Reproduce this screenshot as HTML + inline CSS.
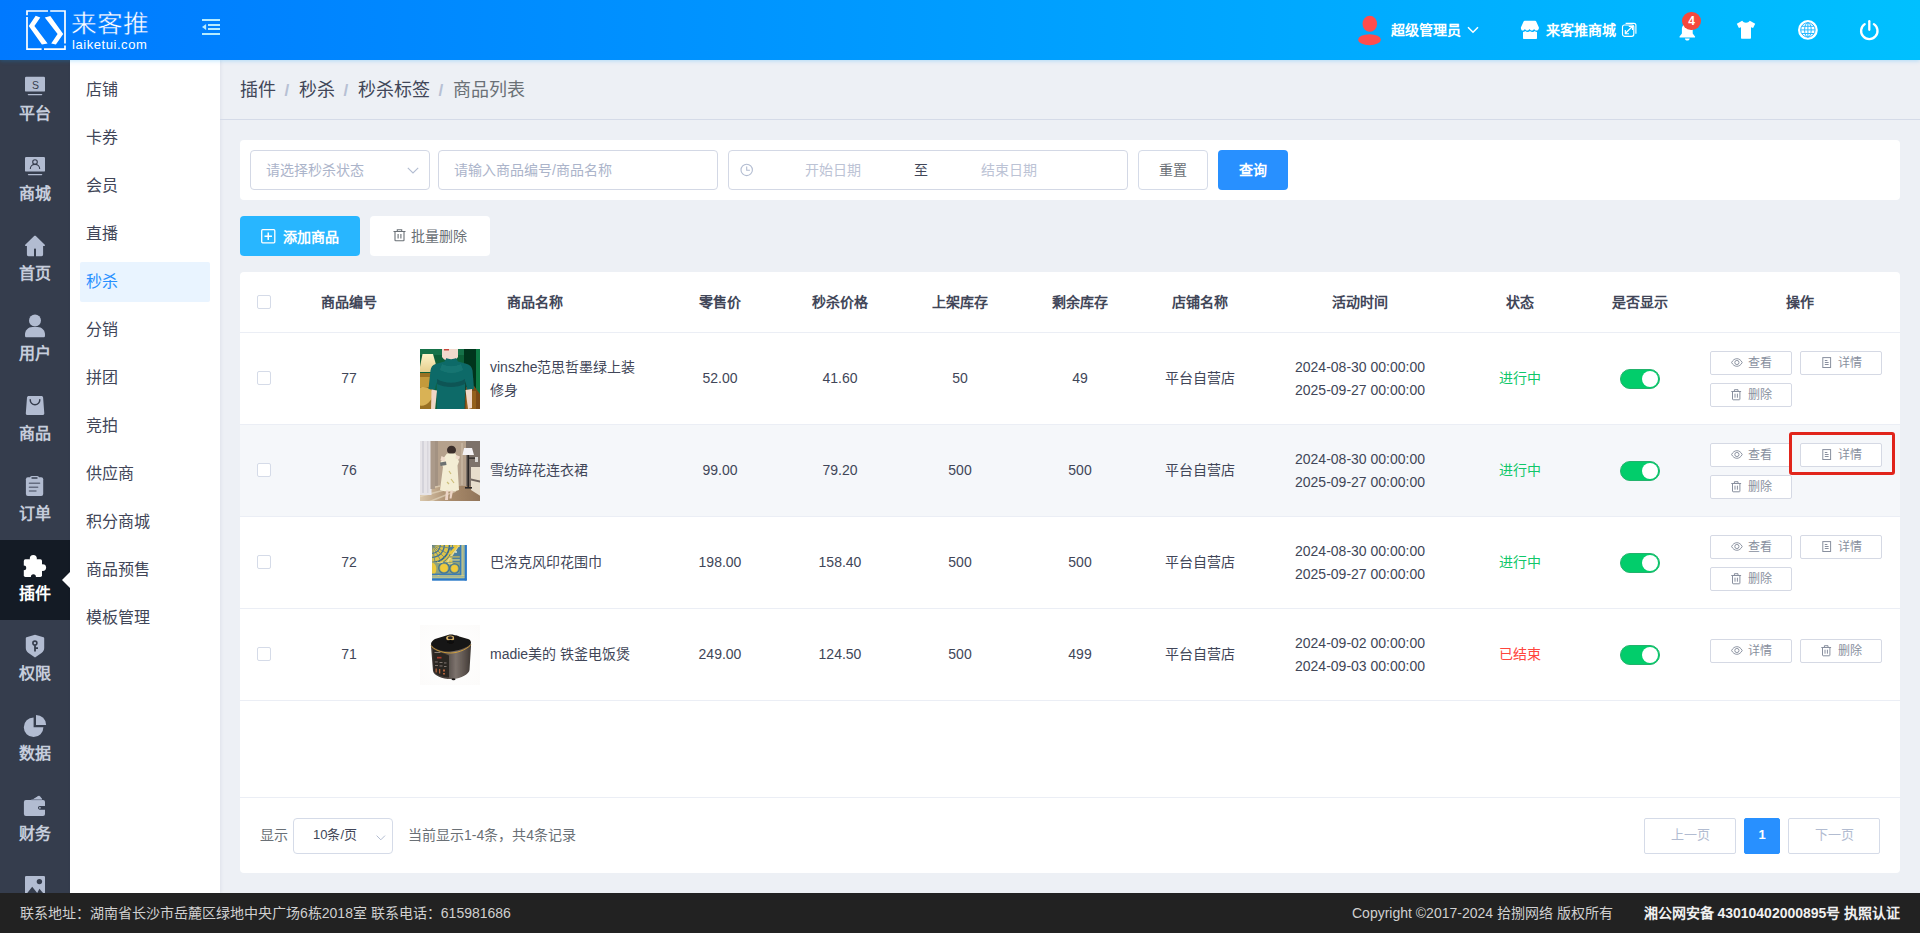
<!DOCTYPE html>
<html lang="zh-CN">
<head>
<meta charset="utf-8">
<title>商品列表</title>
<style>
*{box-sizing:border-box;margin:0;padding:0}
html,body{width:1920px;height:933px;overflow:hidden}
body{font-family:"Liberation Sans",sans-serif;font-size:14px;color:#414658;background:#edf0f5;position:relative}
svg{display:block;overflow:visible}
#hd{position:absolute;left:0;top:0;width:1920px;height:60px;background:linear-gradient(90deg,#0079ff,#00c0ff);box-shadow:0 1px 4px rgba(0,160,255,.25);z-index:10}
#logo{position:absolute;left:0;top:0}
#logotxt{position:absolute;left:71px;top:7px;color:#fff;font-size:26px;line-height:32px;white-space:nowrap;font-weight:normal;transform-origin:0 0;transform:translate(.3px,2.3px) scale(.99,.925);-webkit-text-stroke:.45px #007eff}
#logosub{position:absolute;left:72px;top:38.150px;color:#fff;font-size:13px;line-height:14px;letter-spacing:.56px;white-space:nowrap}
.hx{position:absolute;color:#fff;font-size:14px;line-height:20px;font-weight:bold;white-space:nowrap;top:20px}
.ha{position:absolute;left:0;top:0}
#nav1{position:absolute;left:0;top:60px;width:70px;height:833px;background:#353d4d;overflow:hidden}
.n1{position:absolute;left:0;width:70px;height:80px;color:#c6cddc}
.n1 svg{position:absolute;left:0;top:0}
.n1 span{position:absolute;left:0;top:43px;width:70px;text-align:center;font-size:16px;line-height:22px;font-weight:bold;white-space:nowrap}
.n1.on{background:#141b25;color:#fff}
#nav2{position:absolute;left:70px;top:60px;width:150px;height:833px;background:#fff;box-shadow:1px 0 3px rgba(60,60,100,.08)}
.n2{position:absolute;left:10px;width:130px;height:40px;line-height:40px;padding-left:6px;font-size:16px;color:#414658;border-radius:2px;white-space:nowrap}
.n2.on{background:#e9f4ff;color:#2890ff}
#bc{position:absolute;left:220px;top:60px;width:1700px;height:60px;border-bottom:1px solid #d5dbe8;white-space:nowrap}
#bc span{position:absolute;top:0;font-size:18px;line-height:60px;color:#414658}
#bc i{position:absolute;top:1px;font-style:normal;color:#b7c0d4;font-size:17px;line-height:60px;font-weight:bold}
#bc span.l{color:#6a7076}
#sr{position:absolute;left:240px;top:140px;width:1660px;height:60px;background:#fff;border-radius:4px}
.ip{position:absolute;top:10px;height:40px;border:1px solid #d3d8e5;border-radius:4px;background:#fff;color:#abb4ca;font-size:14px;line-height:38px;white-space:nowrap}
.ip span{position:absolute;top:0}
.ip svg{position:absolute}
.btn{position:absolute;border-radius:4px;font-size:14px;white-space:nowrap}
.btn span{position:absolute;top:0}
.btn svg{position:absolute}
#tb{position:absolute;left:240px;top:272px;width:1660px;height:526px;background:#fff;border-radius:4px 4px 0 0;overflow:hidden}
.row{position:absolute;left:0;width:1660px;border-bottom:1px solid #ebeef5}
.row.hv{background:#f5f7fa}
.c{position:absolute;text-align:center;white-space:nowrap;font-size:14px;line-height:23px;color:#414658}
.th .c{font-weight:bold}
.ck{position:absolute;left:17px;width:14px;height:14px;border:1px solid #d5dbe8;border-radius:2px;background:#fff}
.sw{position:absolute;left:1380px;width:40px;height:20px;border-radius:10px;background:#02cd6b;border:1px solid #22b36c}
.sw:after{content:"";position:absolute;left:21px;top:1px;width:16px;height:16px;border-radius:8px;background:#fff}
.ob{position:absolute;width:82px;height:24px;border:1px solid #d5d9e4;border-radius:2px;background:#fff;color:#888f9e;font-size:12px;line-height:22px;white-space:nowrap}
.ob svg{position:absolute}
.ob span{position:absolute;left:37px;top:0}
.pi{position:absolute;left:180px;width:60px;height:60px;overflow:hidden}
#pg{position:absolute;left:240px;top:797px;width:1660px;height:76px;background:#fff;border-top:1px solid #ebeef5;border-radius:0 0 4px 4px;font-size:14px;color:#6a7076;white-space:nowrap}
#pg span{position:absolute;line-height:20px}
.pb{position:absolute;top:20px;height:36px;border:1px solid #d5dbe8;border-radius:2px;background:#fff;color:#b2bcd1;text-align:center;line-height:32px;font-size:13px}
#ft{position:absolute;left:0;top:893px;width:1920px;height:40px;background:#222;color:#d0d0d0;font-size:14px;line-height:40px;white-space:nowrap;z-index:11}
#ft span{position:absolute;top:0}
#hl{position:absolute;left:1788.800px;top:432.300px;width:106.500px;height:43.200px;border:3px solid #e1251b;border-radius:3px;z-index:5}
</style>
</head>
<body>
<div id="hd">
<svg id="logo" width="160" height="60" viewBox="0 0 160 60">
<g fill="none" stroke="#fff" stroke-width="1.7">
<path d="M48 11H27v4.2M27 17v32.2h14.6M44 49.2h21V45.5M65 43.6V11H50.2"/>
</g>
<polygon fill="#fff" points="35.70,15.80 40.30,17.60 34.40,25.90 47.60,43.40 41.90,44.60 28.75,25.90"/>
<polygon fill="#fff" points="44.80,17.60 50.30,15.90 63.20,33.90 55.90,44.60 51.20,43.40 57.60,33.90"/>
</svg>
<div id="logotxt">来客推</div>
<div id="logosub">laiketui.com</div>
<svg class="ha" style="left:0;top:0" width="240" height="60" viewBox="0 0 240 60"><g fill="#b4ebff"><rect x="202" y="19" width="18" height="2"/><rect x="208" y="24" width="12" height="2"/><rect x="208" y="28" width="12" height="2"/><rect x="202" y="33" width="18" height="2"/><path d="M202 27l4.100-2.950v5.900z"/></g></svg>
<svg class="ha" style="left:1356px;top:14px" width="28" height="34" viewBox="0 0 28 34">
<ellipse cx="13.8" cy="9.8" rx="7.3" ry="8" fill="#ff4d4d"/>
<ellipse cx="13.5" cy="25.7" rx="11.4" ry="5.5" fill="#ff4d4d"/></svg>
<div class="hx" style="left:1390.700px">超级管理员</div>
<svg class="ha" style="left:1467px;top:26px" width="12" height="8" viewBox="0 0 12 8"><path d="M1 1.3l5 5 5-5" fill="none" stroke="#fff" stroke-width="1.5"/></svg>
<svg class="ha" style="left:1520px;top:20px" width="20" height="20" viewBox="0 0 20 20">
<path fill="#fff" d="M4.700 .8h10.400c.5 0 .9.300 1.100.7l2.600 5.800c.1.200.100.400.100.600 0 1.500-1.100 2.600-2.500 2.600-1.100 0-1.900-.6-2.300-1.500-.4.900-1.300 1.500-2.300 1.500s-1.900-.6-2.300-1.500c-.4.900-1.200 1.500-2.300 1.500-1 0-1.900-.6-2.300-1.500-.4.900-1.200 1.500-2.300 1.500C1.700 10.500 .900 9.400 .900 7.900c0-.2 0-.4.100-.6l2.600-5.800c.2-.4.600-.7 1.100-.7z"/>
<path fill="#fff" d="M3 12c.9-.1 1.600-.5 2.200-1.100.6.700 1.400 1.100 2.400 1.100s1.800-.4 2.400-1.100c.6.700 1.400 1.100 2.400 1.100s1.800-.4 2.400-1.100c.6.600 1.300 1 2.200 1.100v6c0 .6-.4 1-1 1H4c-.6 0-1-.4-1-1z"/></svg>
<div class="hx" style="left:1545.600px">来客推商城</div>
<svg class="ha" style="left:1621px;top:22px" width="16" height="16" viewBox="0 0 16 16"><g fill="none" stroke="#fff" stroke-width="1.150">
<rect x="1.500" y="3" width="11.300" height="11.300" rx="2"/><path d="M4.600 1.300h8.300c1.100 0 2 .9 2 2v8.400"/><path d="M4.300 11.500l7-7M7.800 4.300h3.700v3.700M4.300 8v3.700h3.700"/></g></svg>
<svg class="ha" style="left:1678px;top:22px" width="19" height="20" viewBox="0 0 19 20">
<path fill="#fff" d="M9.300 1.500c3.300 0 5.400 2.500 5.400 5.800v4.200l2.300 3.100c.3.400 0 1-.5 1H2.100c-.5 0-.8-.6-.5-1l2.300-3.100V7.300c0-3.300 2.100-5.800 5.400-5.800zM6.900 16.500h4.800c0 1.300-1.100 2.100-2.400 2.100s-2.400-.8-2.400-2.100z"/></svg>
<div class="ha" style="left:1682px;top:12px;width:19px;height:18px;border-radius:9px;background:#f5493d;color:#fff;font-size:12px;line-height:18px;text-align:center;font-weight:bold">4</div>
<svg class="ha" style="left:1736px;top:20px" width="20" height="20" viewBox="0 0 20 20">
<path fill="#fff" d="M6.200 .8c.8 1.300 2.200 1.900 3.800 1.900s3-.6 3.800-1.900l5.400 2.900-2.100 4.300-2.100-.8V17.700c0 .6-.4 1-1 1H6c-.6 0-1-.4-1-1V7.200l-2.100.8L.8 3.700z"/></svg>
<svg class="ha" style="left:1798px;top:20px" width="20" height="20" viewBox="0 0 20 20">
<circle cx="9.900" cy="9.900" r="9.900" fill="#fff"/>
<g fill="none" stroke="#26b8ff" stroke-width="1"><ellipse cx="9.900" cy="9.900" rx="7.200" ry="7.200"/><ellipse cx="9.900" cy="9.900" rx="3.300" ry="7.200"/><path d="M9.900 2.700v14.400M2.700 9.900h14.400M3.800 6.300h12.200M3.800 13.500h12.200"/></g></svg>
<svg class="ha" style="left:1859px;top:19px" width="21" height="22" viewBox="0 0 21 22">
<g fill="none" stroke="#fff" stroke-width="2.300" stroke-linecap="round"><path d="M10.300 2.200v8.600"/><path d="M5.700 5.100a8.200 8.200 0 1 0 9.200 0"/></g></svg>
</div>
<div id="nav1">
<div class="n1" style="top:0px"><svg width="70" height="80" viewBox="0 0 70 80"><rect x="25" y="16.8" width="20" height="14.8" rx="1.200" fill="#b2bcd1"/><rect x="27.700" y="33.900" width="14.600" height="1.400" rx=".7" fill="#b2bcd1"/><text x="35.5" y="28.700" font-size="10.500" text-anchor="middle" fill="#353d4d" font-family="Liberation Sans">S</text></svg><span>平台</span></div>
<div class="n1" style="top:80px"><svg width="70" height="80" viewBox="0 0 70 80"><rect x="25" y="16.9" width="20" height="14.700" rx="1.200" fill="#b2bcd1"/><rect x="27.800" y="33.900" width="14.500" height="1.400" rx=".7" fill="#b2bcd1"/><circle cx="35" cy="22" r="2.300" fill="none" stroke="#353d4d" stroke-width="1.100"/><path d="M30.300 28.900c0-2.600 2.100-4.500 4.700-4.500s4.700 1.900 4.700 4.500" fill="none" stroke="#353d4d" stroke-width="1.100"/></svg><span>商城</span></div>
<div class="n1" style="top:160px"><svg width="70" height="80" viewBox="0 0 70 80"><path fill="#b2bcd1" d="M33.900 16.300c.6-.6 1.600-.6 2.200 0l8.700 8.400c.5.500.2 1.400-.6 1.400h-1.100v8.500c0 .9-.7 1.600-1.600 1.600H36v-6.600c0-.6-.4-1-1-1s-1 .4-1 1v6.600h-5.500c-.9 0-1.600-.7-1.600-1.600v-8.500h-1.100c-.8 0-1.100-.9-.6-1.400z"/></svg><span>首页</span></div>
<div class="n1" style="top:240px"><svg width="70" height="80" viewBox="0 0 70 80"><circle cx="35" cy="20.500" r="6" fill="#b2bcd1"/><path fill="#b2bcd1" d="M25 34.300c0-4.100 3.300-7.400 7.400-7.400h5.200c4.100 0 7.400 3.300 7.400 7.400v1.400c0 .9-.7 1.600-1.600 1.600H26.600c-.9 0-1.600-.7-1.600-1.600z"/></svg><span>用户</span></div>
<div class="n1" style="top:320px"><svg width="70" height="80" viewBox="0 0 70 80"><path fill="#b2bcd1" d="M28.700 15.900h12.700c.9 0 1.700.7 1.700 1.600l1.200 15.800c.1 1-.7 1.800-1.700 1.800H27.500c-1 0-1.800-.8-1.700-1.800L27 17.500c.1-.9.800-1.600 1.700-1.600z"/><path d="M30.200 19.800c0 2.800 2.100 4.900 4.800 4.900s4.800-2.100 4.800-4.900" fill="none" stroke="#353d4d" stroke-width="1.500" stroke-linecap="round"/></svg><span>商品</span></div>
<div class="n1" style="top:400px"><svg width="70" height="80" viewBox="0 0 70 80"><rect x="25.900" y="17.200" width="17.300" height="18.900" rx="2" fill="#b2bcd1"/><rect x="30" y="15.900" width="9" height="3.600" rx="1.600" fill="#b2bcd1"/><rect x="31.300" y="17.300" width="6.400" height="1.500" rx=".7" fill="#353d4d"/><g fill="#656d81"><rect x="28.700" y="22.400" width="11.600" height="1.500" rx=".7"/><rect x="28.700" y="26.400" width="9.700" height="1.500" rx=".7"/><rect x="28.700" y="30.200" width="8" height="1.500" rx=".7"/></g></svg><span>订单</span></div>
<div class="n1 on" style="top:480px"><svg width="70" height="80" viewBox="0 0 70 80"><rect x="23.800" y="19.300" width="18.200" height="17.600" rx="1.600" fill="#fff"/><circle cx="33.300" cy="18.500" r="3.500" fill="#fff"/><circle cx="42.700" cy="27.600" r="3.400" fill="#fff"/><circle cx="23.900" cy="27.900" r="2.400" fill="#141b25"/><circle cx="33.400" cy="36.700" r="2.500" fill="#141b25"/></svg><span>插件</span><svg style="left:62px;top:32px" width="8" height="16" viewBox="0 0 8 16"><path d="M8 0L0 8l8 8z" fill="#fff"/></svg></div>
<div class="n1" style="top:560px"><svg width="70" height="80" viewBox="0 0 70 80"><path fill="#b2bcd1" d="M35 14.700l8.500 2.600c.4.100.7.500.7.900V28c0 2-1 3.800-2.700 4.900L35 37.400l-6.500-4.500c-1.700-1.100-2.700-2.900-2.700-4.900v-9.800c0-.4.300-.8.700-.9z"/><circle cx="34.900" cy="23.100" r="2" fill="none" stroke="#353d4d" stroke-width="1.600"/><path d="M35 25.600v5.800M35.500 28.100h2.500" fill="none" stroke="#353d4d" stroke-width="1.800"/></svg><span>权限</span></div>
<div class="n1" style="top:640px"><svg width="70" height="80" viewBox="0 0 70 80"><path fill="#b2bcd1" d="M33.600 17.500v9.800h9.800a9.800 9.800 0 1 1-9.800-9.800z"/><path fill="#b2bcd1" d="M36 14.900a10.100 10.100 0 0 1 10.100 10.100H36z"/></svg><span>数据</span></div>
<div class="n1" style="top:720px"><svg width="70" height="80" viewBox="0 0 70 80"><path fill="#8d96aa" d="M32.200 20l6-3.900c.5-.3 1.100-.2 1.500.2L42 18.800V20z"/><path fill="#b2bcd1" d="M33.400 19l5-3c.4-.2.9-.2 1.200.2L41.800 18.400V19z"/><rect x="23.900" y="20" width="21.100" height="16.100" rx="2" fill="#b2bcd1"/><path fill="#353d4d" d="M45.200 26h-5.400c-1 0-1.800.8-1.800 1.800s.8 1.900 1.800 1.900h5.400z"/><circle cx="39.900" cy="27.800" r=".9" fill="#b2bcd1"/><rect x="31.300" y="19.300" width="10.900" height=".9" fill="#7a839b"/></svg><span>财务</span></div>
<div class="n1" style="top:800px"><svg width="70" height="80" viewBox="0 0 70 80"><rect x="25" y="15.900" width="20" height="20" rx="1.200" fill="#b2bcd1"/><circle cx="39.400" cy="21.600" r="2.700" fill="#353d4d"/><path fill="#353d4d" d="M26.800 33.600l5.400-6.900 5 6.300 2.200-4.200 4.200 4.800z"/></svg><span>图片</span></div>
</div>
<div id="nav2">
<div class="n2" style="top:10px">店铺</div>
<div class="n2" style="top:58px">卡券</div>
<div class="n2" style="top:106px">会员</div>
<div class="n2" style="top:154px">直播</div>
<div class="n2 on" style="top:202px">秒杀</div>
<div class="n2" style="top:250px">分销</div>
<div class="n2" style="top:298px">拼团</div>
<div class="n2" style="top:346px">竞拍</div>
<div class="n2" style="top:394px">供应商</div>
<div class="n2" style="top:442px">积分商城</div>
<div class="n2" style="top:490px">商品预售</div>
<div class="n2" style="top:538px">模板管理</div>
</div>
<div id="bc">
<span style="left:20px">插件</span><i style="left:64.500px">/</i>
<span style="left:79px">秒杀</span><i style="left:123.500px">/</i>
<span style="left:138px">秒杀标签</span><i style="left:218.500px">/</i>
<span class="l" style="left:233px">商品列表</span>
</div>
<div id="sr">
<div class="ip" style="left:10px;width:180px"><span style="left:15px">请选择秒杀状态</span>
<svg style="left:156px;top:16px" width="12" height="7" viewBox="0 0 12 7"><path d="M.8.800l5.200 5.200 5.200-5.200" fill="none" stroke="#b2bcd1" stroke-width="1.100"/></svg></div>
<div class="ip" style="left:198px;width:280px"><span style="left:15px">请输入商品编号/商品名称</span></div>
<div class="ip" style="left:488px;width:400px">
<svg style="left:11px;top:12px" width="14" height="14" viewBox="0 0 14 14"><circle cx="6.700" cy="6.900" r="5.700" fill="none" stroke="#b2bcd1" stroke-width="1.100"/><path d="M6.700 3.500v3.700h3.200" fill="none" stroke="#b2bcd1" stroke-width="1.100"/></svg>
<span style="left:76px;color:#bcc3d5">开始日期</span><span style="left:185px;color:#414658">至</span><span style="left:252px;color:#bcc3d5">结束日期</span></div>
<div class="btn" style="left:898px;top:10px;width:70px;height:40px;border:1px solid #d5dbe8;background:#fff;color:#6a7076;line-height:38px;text-align:center">重置</div>
<div class="btn" style="left:978px;top:10px;width:70px;height:40px;background:#2890ff;color:#fff;line-height:40px;text-align:center;font-weight:bold">查询</div>
</div>
<div class="btn" style="left:240px;top:216px;width:120px;height:40px;background:#28b6ff;color:#fff;line-height:40px">
<svg style="left:21px;top:13px" width="15" height="15" viewBox="0 0 15 15"><rect x=".7" y=".7" width="13.100" height="13.100" rx="1" fill="none" stroke="#fff" stroke-width="1.300"/><path d="M7.250 3.500v7.500M3.500 7.250h7.500" stroke="#fff" stroke-width="1.500"/></svg>
<span style="left:42.500px;top:1px;font-weight:bold">添加商品</span></div>
<div class="btn" style="left:370px;top:216px;width:120px;height:40px;background:#fff;color:#6a7076;line-height:40px">
<svg style="left:23px;top:13.400px" width="13" height="12.500" viewBox="0 0 13 14" preserveAspectRatio="none"><g fill="none" stroke="#6a7076" stroke-width="1.100"><path d="M.5 2.900h12M4.300 2.700V.8h4.400v1.900M2 3v9.500c0 .4.300.7.700.7h7.600c.4 0 .7-.3.700-.7V3M5.100 5.600v5M7.900 5.600v5"/></g></svg>
<span style="left:41px">批量删除</span></div>
<div id="tb">
<div class="row th" style="top:0;height:61px"><div class="ck" style="top:23px"></div><div class="c" style="left:48px;width:122px;top:19px;">商品编号</div><div class="c" style="left:170px;width:250px;top:19px;">商品名称</div><div class="c" style="left:420px;width:120px;top:19px;">零售价</div><div class="c" style="left:540px;width:120px;top:19px;">秒杀价格</div><div class="c" style="left:660px;width:120px;top:19px;">上架库存</div><div class="c" style="left:780px;width:120px;top:19px;">剩余库存</div><div class="c" style="left:900px;width:120px;top:19px;">店铺名称</div><div class="c" style="left:1020px;width:200px;top:19px;">活动时间</div><div class="c" style="left:1220px;width:120px;top:19px;">状态</div><div class="c" style="left:1340px;width:120px;top:19px;">是否显示</div><div class="c" style="left:1460px;width:200px;top:19px;">操作</div></div>
<div class="row" style="top:61px;height:92px"><div class="ck" style="top:38px"></div><div class="c" style="left:48px;width:122px;top:34px;">77</div><div class="pi" style="top:16px"><svg width="60" height="60" viewBox="0 0 60 60"><defs><filter id="b77" x="-5%" y="-5%" width="110%" height="110%"><feGaussianBlur stdDeviation=".7"/></filter>
<linearGradient id="g77a" x1="0" y1="0" x2="0" y2="1"><stop offset="0" stop-color="#fdf3c8"/><stop offset="1" stop-color="#e6cf8e"/></linearGradient></defs>
<rect width="60" height="60" fill="#0f5a39"/>
<g filter="url(#b77)">
<rect x="-2" y="-2" width="64" height="64" fill="#106039"/>
<rect x="-2" y="-2" width="50" height="8" fill="#17724a"/>
<rect x="44" y="-2" width="13" height="64" fill="#06351f"/>
<rect x="56" y="-2" width="6" height="64" fill="#107a45"/>
<rect x="-2" y="24" width="16" height="40" fill="#9a7124"/>
<path d="M-2 40c4-3 8-2 12 0s3 8 0 12-8 6-12 4z" fill="#d9b254"/>
<path d="M0 28h10v10H0z" fill="#c49a3a"/>
<path d="M2.500 5h10.500l5 18H-1z" fill="url(#g77a)"/>
<path d="M46 38l8-1 6 8v17H44z" fill="#7a4a18"/>
<path d="M46 42h10v20H46z" fill="#94601f"/>
<path d="M22-2h16v10c-2 3-5 4-8 4s-6-1-8-4z" fill="#f1d9cd"/>
<path d="M24-1h5v2.500h-5z" fill="#c8453a"/>
<path d="M26.500 9c2 1.500 7 1.500 9.500 0l2 3.500 9 2.500c3 1 5 3 5.500 6.500l1.500 18.500-7 1-1.500-9-1 29H17l-.5-28-1.500 8-6.500-1 2-18.500c.5-3.500 2-5.500 5-6.500l9-2.500z" fill="#0e6a68"/>
<path d="M17 30c8 5 20 5 28 0l0 5c-8 4-20 4-28 0z" fill="#0a5455"/>
<path d="M22 15c5 3 13 3 19 0l2 6c-7 4-16 4-23 0z" fill="#1a7a76" opacity=".7"/>
<path d="M11.500 40.500l5.500 1-2 20h-4z" fill="#f0d6c6"/>
<path d="M45.500 41l6.500-1 0 19-4 1z" fill="#f0d6c6"/>
</g></svg></div><div class="c" style="left:250px;width:160px;top:23px;text-align:left;white-space:normal">vinszhe范思哲墨绿上装<br>修身</div><div class="c" style="left:420px;width:120px;top:34px;">52.00</div><div class="c" style="left:540px;width:120px;top:34px;">41.60</div><div class="c" style="left:660px;width:120px;top:34px;">50</div><div class="c" style="left:780px;width:120px;top:34px;">49</div><div class="c" style="left:900px;width:120px;top:34px;">平台自营店</div><div class="c" style="left:1020px;width:200px;top:23px;">2024-08-30 00:00:00<br>2025-09-27 00:00:00</div><div class="c" style="left:1220px;width:120px;top:34px;color:#0fc76a">进行中</div><div class="sw" style="top:36px"></div><div class="ob" style="left:1470px;top:18px"><svg style="left:20px;top:5.800px" width="12" height="9" viewBox="0 0 12 9"><g fill="none" stroke="#888f9e" stroke-width=".95"><path d="M.6 4.500C1.900 2 3.700 .700 5.900 .700s4 1.300 5.300 3.800C9.900 7 8.100 8.300 5.900 8.300S1.900 7 .6 4.500z"/><circle cx="5.900" cy="4.500" r="2.100"/></g></svg><span>查看</span></div><div class="ob" style="left:1560px;top:18px"><svg style="left:21px;top:5px" width="10" height="12" viewBox="0 0 10 12"><g fill="none" stroke="#888f9e" stroke-width="1"><rect x=".8" y=".6" width="7.800" height="9.900"/><path d="M2.800 3.500h2.600M2.800 5.500h3.800M2.800 7.500h3.800"/></g></svg><span>详情</span></div><div class="ob" style="left:1470px;top:50px"><svg style="left:20px;top:4.600px" width="11" height="12" viewBox="0 0 11 12"><g fill="none" stroke="#888f9e" stroke-width="1"><path d="M.3 2.500h9.800M3.400 2.300V.700h3.600v1.600M1.500 2.700v7.500c0 .3.300.6.600.6h6.200c.3 0 .6-.3.600-.6V2.700M4 4.700v4M6.400 4.700v4"/></g></svg><span>删除</span></div></div>
<div class="row hv" style="top:153px;height:92px"><div class="ck" style="top:38px"></div><div class="c" style="left:48px;width:122px;top:34px;">76</div><div class="pi" style="top:16px"><svg width="60" height="60" viewBox="0 0 60 60"><defs><filter id="b76" x="-5%" y="-5%" width="110%" height="110%"><feGaussianBlur stdDeviation=".65"/></filter>
<linearGradient id="g76f" x1="0" y1="0" x2="1" y2="0"><stop offset="0" stop-color="#dccbb0"/><stop offset=".5" stop-color="#a98b6c"/><stop offset="1" stop-color="#8f7358"/></linearGradient></defs>
<rect width="60" height="60" fill="#b09c88"/>
<g filter="url(#b76)">
<rect x="-2" y="-2" width="64" height="50" fill="#b5a18c"/>
<rect x="15" y="-2" width="3" height="50" fill="#a39282"/>
<rect x="41" y="2" width="2" height="42" fill="#c3b19c"/>
<rect x="46" y="-2" width="16" height="50" fill="#7d726b"/>
<rect x="-2" y="45" width="64" height="17" fill="url(#g76f)"/>
<path d="M-2 50l22-5M-2 56l30-8M6 62l30-12" stroke="#e8dcc4" stroke-width="1.500" opacity=".6" fill="none"/>
<rect x="-2" y="-2" width="13.500" height="56" fill="#e6e4e8"/>
<rect x="2" y="-2" width="2" height="54" fill="#d4d3da"/><rect x="7" y="-2" width="1.500" height="54" fill="#d8d6dc"/>
<rect x="10.500" y="-2" width="4.500" height="50" fill="#ab9a8a"/>
<path d="M51 26h11v30l-11-7z" fill="#e7ddcc"/><path d="M51 37.500l11 2.500v2l-11-2.500z" fill="#6f655e"/>
<path d="M44 7h8l2 7H42.500z" fill="#f4f2f4"/>
<rect x="47.400" y="14" width="1.700" height="33" fill="#2b2725"/><rect x="45" y="46" width="7" height="1.600" fill="#2b2725"/>
<rect x="49" y="16.500" width="8" height="1.300" fill="#2b2725"/><rect x="55" y="16" width="3" height="5" fill="#d9d6d3"/>
<ellipse cx="31.500" cy="9" rx="4.500" ry="4.300" fill="#3a2f2b"/>
<path d="M27 12.500h8.500l3.500 8-1.500 4 1.500 24.500c-6 2-13 2-19 0l3-23-2.500-5z" fill="#f3edd4"/>
<path d="M21.500 15l4 2-1 4-4-2z" fill="#f0dccc"/><path d="M36 14l4 1.500-1 3-3.500-1z" fill="#f0dccc"/>
<path d="M20 21.500l6-1 .5 3.500-6 1z" fill="#6d7272"/>
<path d="M29 30l2 3M31 38l3 4M27 41l2 2" stroke="#cdbf7a" stroke-width="1.200" fill="none"/>
<path d="M26 49.500h2.500l-.5 9.500h-3zM30.500 49.500H33l-1.500 8h-2z" fill="#ecd4c5"/>
</g></svg></div><div class="c" style="left:250px;width:160px;top:34px;text-align:left;white-space:normal">雪纺碎花连衣裙</div><div class="c" style="left:420px;width:120px;top:34px;">99.00</div><div class="c" style="left:540px;width:120px;top:34px;">79.20</div><div class="c" style="left:660px;width:120px;top:34px;">500</div><div class="c" style="left:780px;width:120px;top:34px;">500</div><div class="c" style="left:900px;width:120px;top:34px;">平台自营店</div><div class="c" style="left:1020px;width:200px;top:23px;">2024-08-30 00:00:00<br>2025-09-27 00:00:00</div><div class="c" style="left:1220px;width:120px;top:34px;color:#0fc76a">进行中</div><div class="sw" style="top:36px"></div><div class="ob" style="left:1470px;top:18px"><svg style="left:20px;top:5.800px" width="12" height="9" viewBox="0 0 12 9"><g fill="none" stroke="#888f9e" stroke-width=".95"><path d="M.6 4.500C1.900 2 3.700 .700 5.900 .700s4 1.300 5.300 3.800C9.900 7 8.100 8.300 5.900 8.300S1.900 7 .6 4.500z"/><circle cx="5.900" cy="4.500" r="2.100"/></g></svg><span>查看</span></div><div class="ob" style="left:1560px;top:18px"><svg style="left:21px;top:5px" width="10" height="12" viewBox="0 0 10 12"><g fill="none" stroke="#888f9e" stroke-width="1"><rect x=".8" y=".6" width="7.800" height="9.900"/><path d="M2.800 3.500h2.600M2.800 5.500h3.800M2.800 7.500h3.800"/></g></svg><span>详情</span></div><div class="ob" style="left:1470px;top:50px"><svg style="left:20px;top:4.600px" width="11" height="12" viewBox="0 0 11 12"><g fill="none" stroke="#888f9e" stroke-width="1"><path d="M.3 2.500h9.800M3.400 2.300V.700h3.600v1.600M1.500 2.700v7.500c0 .3.300.6.600.6h6.200c.3 0 .6-.3.600-.6V2.700M4 4.700v4M6.400 4.700v4"/></g></svg><span>删除</span></div></div>
<div class="row" style="top:245px;height:92px"><div class="ck" style="top:38px"></div><div class="c" style="left:48px;width:122px;top:34px;">72</div><div class="pi" style="top:16px"><svg width="60" height="60" viewBox="0 0 60 60"><defs><filter id="b72" x="-5%" y="-5%" width="110%" height="110%"><feGaussianBlur stdDeviation=".6"/></filter>
<clipPath id="c72"><rect x="12.100" y="12.100" width="34.600" height="35.400"/></clipPath></defs>
<rect width="60" height="60" fill="#fff"/>
<g filter="url(#b72)"><g clip-path="url(#c72)">
<rect x="12" y="12" width="35" height="36" fill="#2f7fc6"/>
<rect x="12" y="12" width="28" height="29" fill="#dcc34a"/>
<circle cx="12" cy="12" r="6" fill="#ecc93c"/>
<circle cx="12" cy="12" r="8.300" fill="none" stroke="#3f7292" stroke-width="1.200"/>
<circle cx="12" cy="12" r="12.300" fill="none" stroke="#3f7292" stroke-width="1.300"/>
<circle cx="12" cy="12" r="17.500" fill="none" stroke="#35698c" stroke-width="1.600"/>
<circle cx="12" cy="12" r="20.500" fill="none" stroke="#4a7a93" stroke-width="1"/>
<path d="M12 12l16 9M12 12l9 16M12 12l17 3M12 12l3 17M12 12l13 13" stroke="#5a8090" stroke-width=".8" fill="none"/>
<path d="M29 14h11v15H32.500c0-6-1-11-3.500-15z" fill="#4d7f9d"/>
<path d="M38.500 12.500L18 43" stroke="#e8dc96" stroke-width="1.600"/>
<path d="M30 21l7-8" stroke="#ecc93c" stroke-width="2.600"/>
<circle cx="36" cy="19" r=".9" fill="#f7f3cf"/>
<path d="M12 29h28v12H12z" fill="#8fa27a"/>
<circle cx="24" cy="35" r="3.900" fill="#efca3a"/><circle cx="24" cy="35" r="5.300" fill="none" stroke="#3f7292" stroke-width="1.100"/>
<circle cx="34.500" cy="35.500" r="3.400" fill="#efca3a"/><circle cx="34.500" cy="35.500" r="4.800" fill="none" stroke="#3f7292" stroke-width="1.100"/>
<path d="M12 29.500c4 1 5 5 4 9s-3 3-4 3z" fill="#ecc93c"/>
<path d="M17 29c2 1 4 1 6 0M28 30c1.500 1 3 1 4.500 0" stroke="#e6d373" stroke-width="1.200" fill="none"/>
<rect x="29.500" y="23" width="10.500" height="1.700" fill="#a7a86a"/><rect x="29.500" y="26.300" width="10.500" height="1.300" fill="#d2cf8c"/>
<rect x="39.800" y="12" width="1.700" height="30" fill="#3b7cb5"/>
<rect x="12" y="40.600" width="30" height="1.700" fill="#3b7cb5"/>
<rect x="41.500" y="12" width="3.200" height="33" fill="#dcd27c"/><rect x="42.700" y="12" width=".8" height="33" fill="#6c9ab0"/>
<rect x="12" y="42.300" width="32.700" height="3.200" fill="#dcd27c"/><rect x="12" y="43.500" width="32.700" height=".8" fill="#6c9ab0"/>
<rect x="44.700" y="12" width="2.300" height="36" fill="#2a78c8"/><rect x="12" y="45.500" width="35" height="2.300" fill="#2a78c8"/>
</g></g></svg></div><div class="c" style="left:250px;width:160px;top:34px;text-align:left;white-space:normal">巴洛克风印花围巾</div><div class="c" style="left:420px;width:120px;top:34px;">198.00</div><div class="c" style="left:540px;width:120px;top:34px;">158.40</div><div class="c" style="left:660px;width:120px;top:34px;">500</div><div class="c" style="left:780px;width:120px;top:34px;">500</div><div class="c" style="left:900px;width:120px;top:34px;">平台自营店</div><div class="c" style="left:1020px;width:200px;top:23px;">2024-08-30 00:00:00<br>2025-09-27 00:00:00</div><div class="c" style="left:1220px;width:120px;top:34px;color:#0fc76a">进行中</div><div class="sw" style="top:36px"></div><div class="ob" style="left:1470px;top:18px"><svg style="left:20px;top:5.800px" width="12" height="9" viewBox="0 0 12 9"><g fill="none" stroke="#888f9e" stroke-width=".95"><path d="M.6 4.500C1.900 2 3.700 .700 5.900 .700s4 1.300 5.300 3.800C9.900 7 8.100 8.300 5.900 8.300S1.900 7 .6 4.500z"/><circle cx="5.900" cy="4.500" r="2.100"/></g></svg><span>查看</span></div><div class="ob" style="left:1560px;top:18px"><svg style="left:21px;top:5px" width="10" height="12" viewBox="0 0 10 12"><g fill="none" stroke="#888f9e" stroke-width="1"><rect x=".8" y=".6" width="7.800" height="9.900"/><path d="M2.800 3.500h2.600M2.800 5.500h3.800M2.800 7.500h3.800"/></g></svg><span>详情</span></div><div class="ob" style="left:1470px;top:50px"><svg style="left:20px;top:4.600px" width="11" height="12" viewBox="0 0 11 12"><g fill="none" stroke="#888f9e" stroke-width="1"><path d="M.3 2.500h9.800M3.400 2.300V.700h3.600v1.600M1.500 2.700v7.500c0 .3.300.6.600.6h6.200c.3 0 .6-.3.600-.6V2.700M4 4.700v4M6.400 4.700v4"/></g></svg><span>删除</span></div></div>
<div class="row" style="top:337px;height:92px"><div class="ck" style="top:38px"></div><div class="c" style="left:48px;width:122px;top:34px;">71</div><div class="pi" style="top:16px"><svg width="60" height="60" viewBox="0 0 60 60"><defs><filter id="b71" x="-5%" y="-5%" width="110%" height="110%"><feGaussianBlur stdDeviation=".55"/></filter>
<linearGradient id="g71" x1="0" y1="0" x2="1" y2="0"><stop offset="0" stop-color="#3a3330"/><stop offset=".35" stop-color="#4a423e"/><stop offset=".62" stop-color="#7d736d"/><stop offset=".85" stop-color="#5a514c"/><stop offset="1" stop-color="#3f3834"/></linearGradient>
<radialGradient id="g71b" cx=".5" cy=".5" r=".7"><stop offset="0" stop-color="#ffffff"/><stop offset="1" stop-color="#fcfbfa"/></radialGradient></defs>
<rect width="60" height="60" fill="url(#g71b)"/>
<g filter="url(#b71)">
<path d="M11 21c0-2 1-3 3-4l15 8 21-7c1 1 1 2 1 3l-1.500 24c-.5 4-8 8.500-17 9s-18.500-3-19.500-8z" fill="url(#g71)"/>
<path d="M13 24.500l16 6v22c-7-.5-14-3-15-7z" fill="#2a2522"/>
<path d="M11 19c0-2 2-4 4-5l13-4c2-.6 4-.6 6 0l14 4c2 .6 3 2 3 4-1 3-10 7.500-21 8.500C20 27 12 22 11 19z" fill="#171513"/>
<path d="M11 20.500c2 3.500 10 7.500 19.500 7.500S49 22.500 51 19.500" fill="none" stroke="#d9a53c" stroke-width=".9"/>
<ellipse cx="30.300" cy="13" rx="4.200" ry="2.600" fill="#d8b469"/><ellipse cx="30.300" cy="12.800" rx="2.500" ry="1.500" fill="#2a2420"/>
<ellipse cx="30.500" cy="16.800" rx="3.500" ry="1.800" fill="#0c0b0a"/>
<ellipse cx="36.500" cy="12.700" rx="2.600" ry="2.100" fill="#1a1715"/>
<rect x="17" y="31.800" width="4.500" height="1.700" fill="#a83a2c"/>
<g fill="#8a7f78"><rect x="14.500" y="27" width="6" height="1"/><rect x="14.800" y="36.500" width="3" height=".9"/><rect x="19.500" y="37" width="3" height=".9"/><rect x="24" y="37.500" width="2.500" height=".9"/><rect x="15" y="40" width="3" height=".9"/><rect x="19.500" y="40.500" width="3" height=".9"/><rect x="24" y="41" width="2.500" height=".9"/></g>
<g fill="#b0623a"><rect x="15.500" y="43.500" width="1.300" height="4"/><rect x="19" y="44" width="1.300" height="4.500"/><rect x="23" y="44.500" width="2" height="2"/><rect x="23" y="48" width="2" height="1.500"/></g>
<ellipse cx="33.500" cy="54.300" rx="2" ry="1" fill="#1a1715"/>
</g></svg></div><div class="c" style="left:250px;width:160px;top:34px;text-align:left;white-space:normal">madie美的 铁釜电饭煲</div><div class="c" style="left:420px;width:120px;top:34px;">249.00</div><div class="c" style="left:540px;width:120px;top:34px;">124.50</div><div class="c" style="left:660px;width:120px;top:34px;">500</div><div class="c" style="left:780px;width:120px;top:34px;">499</div><div class="c" style="left:900px;width:120px;top:34px;">平台自营店</div><div class="c" style="left:1020px;width:200px;top:23px;">2024-09-02 00:00:00<br>2024-09-03 00:00:00</div><div class="c" style="left:1220px;width:120px;top:34px;color:#ff453d">已结束</div><div class="sw" style="top:36px"></div><div class="ob" style="left:1470px;top:30px"><svg style="left:20px;top:5.800px" width="12" height="9" viewBox="0 0 12 9"><g fill="none" stroke="#888f9e" stroke-width=".95"><path d="M.6 4.500C1.900 2 3.700 .700 5.900 .700s4 1.300 5.300 3.800C9.900 7 8.100 8.300 5.900 8.300S1.900 7 .6 4.500z"/><circle cx="5.900" cy="4.500" r="2.100"/></g></svg><span>详情</span></div><div class="ob" style="left:1560px;top:30px"><svg style="left:20px;top:4.600px" width="11" height="12" viewBox="0 0 11 12"><g fill="none" stroke="#888f9e" stroke-width="1"><path d="M.3 2.500h9.800M3.400 2.300V.700h3.600v1.600M1.500 2.700v7.500c0 .3.300.6.600.6h6.200c.3 0 .6-.3.600-.6V2.700M4 4.700v4M6.400 4.700v4"/></g></svg><span>删除</span></div></div>
</div>
<div id="hl"></div>
<div id="pg">
<span style="left:20px;top:27px">显示</span>
<div class="pb" style="left:53px;width:100px;border-radius:4px;color:#414658;text-align:left;padding-left:19px">10条/页
<svg style="position:absolute;left:82px;top:16px" width="10" height="6" viewBox="0 0 10 6"><path d="M.600.600l4.200 4.200 4.200-4.200" fill="none" stroke="#b2bcd1" stroke-width="1"/></svg></div>
<span style="left:168px;top:27px">当前显示1-4条，共4条记录</span>
<div class="pb" style="left:1404px;width:92px">上一页</div>
<div class="pb" style="left:1504px;width:36px;background:#2890ff;border-color:#2890ff;color:#fff;font-weight:bold">1</div>
<div class="pb" style="left:1548px;width:92px">下一页</div>
</div>
<div id="ft">
<span style="left:20px">联系地址：湖南省长沙市岳麓区绿地中央广场6栋2018室 联系电话：615981686</span>
<span style="left:1352px">Copyright ©2017-2024 拾捌网络 版权所有</span>
<span style="left:1643.500px;font-weight:bold;color:#f0f0f0">湘公网安备 43010402000895号 执照认证</span>
</div>
</body>
</html>
